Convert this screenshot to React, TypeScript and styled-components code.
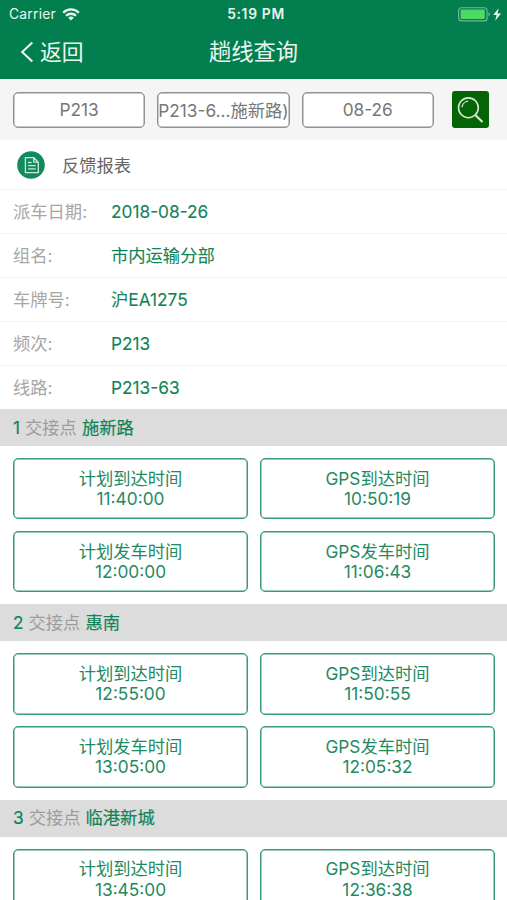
import React from "react";
import styled, { createGlobalStyle } from "styled-components";

const GREEN = "#118458";

const GlobalStyle = createGlobalStyle`
  * { box-sizing: border-box; }
  html, body { margin: 0; padding: 0; background: #fff; }
  body {
    height: 900px;
    overflow: hidden;
    font-family: Inter, "Noto Sans CJK SC", sans-serif;
    font-size: 17.3px;
    color: #666;
  }
  button { font: inherit; color: inherit; padding: 0; margin: 0; }
`;

const Screen = styled.main`
  width: 507px;
  height: 900px;
  overflow: hidden;
  background: #fff;
`;

const Header = styled.header`
  height: 79px;
  background: #037f4f;
  color: #e9f6f0;
`;

const StatusBar = styled.div`
  display: grid;
  grid-template-columns: 1fr auto 1fr;
  align-items: center;
  height: 27px;
  padding: 0 5px 0 9px;
  font-size: 13.8px;
  line-height: 27px;
`;

const Carrier = styled.div`
  display: flex;
  align-items: center;
  gap: 6px;
  padding-top: 1px;
  letter-spacing: 0.25px;
`;

const Clock = styled.div`
  padding: 1px 0 0 1px;
  font-weight: 600;
  letter-spacing: 0.7px;
`;

const Power = styled.div`
  display: flex;
  align-items: center;
  justify-content: flex-end;
`;

const NavBar = styled.nav`
  display: grid;
  grid-template-columns: 1fr auto 1fr;
  align-items: center;
  height: 50px;
  padding: 0 20px;
`;

const BackButton = styled.button`
  display: flex;
  align-items: center;
  gap: 5px;
  border: 0;
  background: none;
  font-size: 21.8px;
  line-height: 30px;
`;

const Title = styled.h1`
  margin: 0;
  font-size: 22.3px;
  font-weight: 400;
  line-height: 30px;
`;

const Filters = styled.section`
  display: flex;
  align-items: center;
  gap: 12px;
  height: 61px;
  padding: 0 13px;
  background: #f5f5f5;
`;

const FilterButton = styled.button`
  display: flex;
  align-items: center;
  justify-content: center;
  width: 132.3px;
  height: 36px;
  border: 1px solid #929292;
  border-radius: 5px;
  box-shadow: inset 0 0 0 0.5px #929292;
  background: #fff;
  color: #777;
  white-space: nowrap;
  overflow: hidden;
`;

const SearchButton = styled.button`
  display: flex;
  width: 37px;
  height: 37px;
  margin-left: 6.1px;
  border: 0;
  border-radius: 3px;
  background: #056405;
`;

const ReportTitle = styled.section`
  display: flex;
  align-items: center;
  gap: 17px;
  height: 50px;
  padding-left: 17px;
  border-bottom: 1px solid #f3f3f3;
`;

const DetailRow = styled.div`
  display: grid;
  grid-template-columns: 98px 1fr;
  align-items: center;
  height: 44px;
  padding: 0 13px;
  border-bottom: 1px solid #f4f4f4;
  line-height: 24px;

  &:last-child {
    height: 43px;
    border-bottom: 0;
  }
`;

const Label = styled.span`
  color: #a6a6a6;
  font-weight: 400;
`;

const Value = styled.span<{ $stroke?: number }>`
  color: ${GREEN};
  font-weight: 400;
  -webkit-text-stroke: ${(p) => p.$stroke ?? 0.1}px ${GREEN};
`;

const StopLabel = styled(Label)`
  color: #9c9c9c;
`;

const StopHeader = styled.h2`
  display: flex;
  align-items: center;
  gap: 5px;
  height: 37px;
  margin: 0;
  padding: 0 13px;
  background: #dcdcdc;
  font-size: inherit;
  line-height: 24px;
`;

const TimeGrid = styled.div`
  display: grid;
  grid-template-columns: 235px 235px;
  grid-auto-rows: 61.25px;
  gap: 11.75px 12px;
  padding: 12px 13px;
`;

const TimeCard = styled.div`
  display: flex;
  flex-direction: column;
  align-items: center;
  justify-content: center;
  padding-top: 1px;
  border: 1px solid #3b9a76;
  border-radius: 5px;
  box-shadow: inset 0 0 0 0.5px #3b9a76;
  color: #1f8a61;
  line-height: 20.5px;
`;

const details = [
  ["派车日期:", "2018-08-26"],
  ["组名:", "市内运输分部"],
  ["车牌号:", "沪EA1275"],
  ["频次:", "P213"],
  ["线路:", "P213-63"],
];

const timeLabels = ["计划到达时间", "GPS到达时间", "计划发车时间", "GPS发车时间"];

const stops = [
  { name: "施新路", times: ["11:40:00", "10:50:19", "12:00:00", "11:06:43"] },
  { name: "惠南", times: ["12:55:00", "11:50:55", "13:05:00", "12:05:32"] },
  { name: "临港新城", times: ["13:45:00", "12:36:38"] },
];

const WifiIcon = () => (
  <svg width="18" height="13" viewBox="0 0 18 13" fill="none" stroke="currentColor" strokeWidth="2.3">
    <path d="M1.2 4.7a11 11 0 0 1 15.6 0M4 7.8a7.1 7.1 0 0 1 10 0" />
    <path d="M9 12.5 6.2 9.8a4 4 0 0 1 5.6 0z" fill="currentColor" stroke="none" />
  </svg>
);

const BatteryIcon = () => (
  <svg width="44" height="15" viewBox="0 0 44 15">
    <rect x="0.6" y="0.7" width="28.5" height="13.2" rx="3" fill="none" stroke="#73b999" strokeWidth="1.1" />
    <rect x="2.6" y="2.6" width="24.2" height="9.4" rx="1.2" fill="#4cd964" />
    <path d="M30.5 5.2q1.5.6 1.5 2.1t-1.5 2.1z" fill="#73b999" />
    <path d="M40.6 1.3 35.2 8h3.4l-1.4 5.8 5.9-7.4h-3.5z" fill="#e9f6f0" />
  </svg>
);

const BackIcon = () => (
  <svg width="15" height="22" viewBox="0 0 15 22" fill="none" stroke="currentColor" strokeWidth="2.1">
    <path d="M12.3 1.4 2.2 11l10.1 9.6" />
  </svg>
);

const SearchIcon = () => (
  <svg width="37" height="37" viewBox="0 0 37 37" fill="none" stroke="#d7e8d2">
    <circle cx="16.4" cy="16.8" r="9.9" strokeWidth="1.6" />
    <path d="M10 16.2a6.7 6.7 0 0 1 6.1-6" strokeWidth="1.3" />
    <path d="m23.3 24 7.2 7" strokeWidth="2.2" />
  </svg>
);

const ReportIcon = () => (
  <svg width="28" height="28" viewBox="0 0 28 28" fill="none" stroke="#cce8da" strokeWidth="1.3">
    <circle cx="14" cy="14" r="13.8" fill="#128b5c" stroke="none" />
    <path d="M8.4 6.7h8.4l4.5 4.5v10.5H8.4zM16.8 6.7v4.5h4.5M11 11.5h3.6M11 14.7h7.6M11 17.9h7.6" />
  </svg>
);

export default function App() {
  return (
    <>
      <GlobalStyle />
      <Screen>
        <Header>
          <StatusBar>
            <Carrier>Carrier <WifiIcon /></Carrier>
            <Clock>5:19 PM</Clock>
            <Power><BatteryIcon /></Power>
          </StatusBar>
          <NavBar>
            <BackButton><BackIcon />返回</BackButton>
            <Title>趟线查询</Title>
          </NavBar>
        </Header>
        <Filters>
          <FilterButton>P213</FilterButton>
          <FilterButton>P213-6...施新路)</FilterButton>
          <FilterButton>08-26</FilterButton>
          <SearchButton aria-label="查询"><SearchIcon /></SearchButton>
        </Filters>
        <ReportTitle><ReportIcon />反馈报表</ReportTitle>
        <section>
          {details.map(([label, value]) => (
            <DetailRow key={label}>
              <Label>{label}</Label>
              <Value>{value}</Value>
            </DetailRow>
          ))}
        </section>
        {stops.map((stop, index) => (
          <section key={stop.name}>
            <StopHeader>
              <Value $stroke={0.2}>{index + 1}</Value>
              <StopLabel>交接点</StopLabel>
              <Value $stroke={0.2}>{stop.name}</Value>
            </StopHeader>
            <TimeGrid>
              {stop.times.map((time, i) => (
                <TimeCard key={timeLabels[i]}>
                  <span>{timeLabels[i]}</span>
                  <span>{time}</span>
                </TimeCard>
              ))}
            </TimeGrid>
          </section>
        ))}
      </Screen>
    </>
  );
}
